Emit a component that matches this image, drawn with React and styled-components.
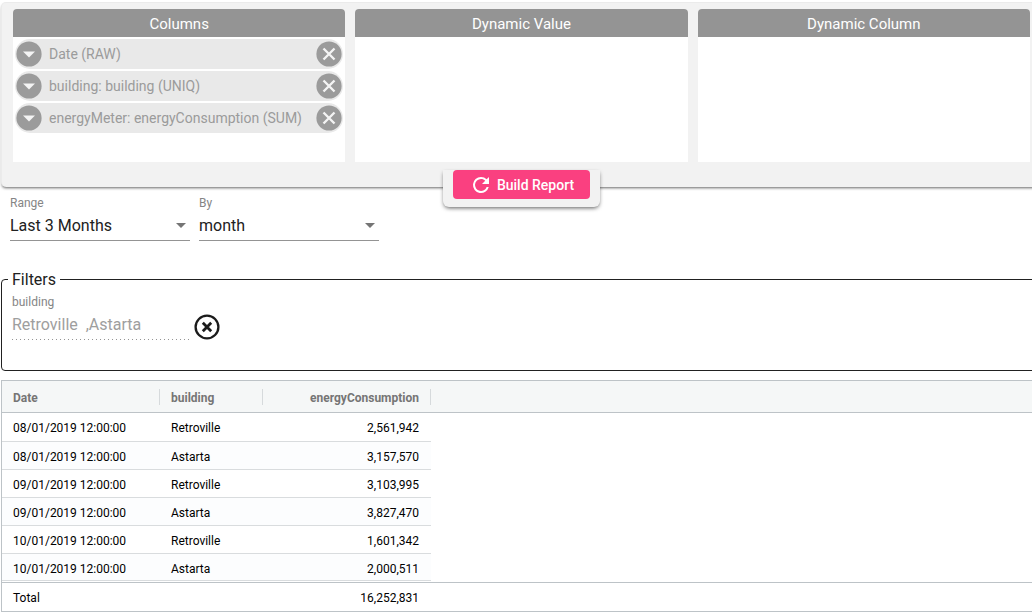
import React from 'react';
import styled, { createGlobalStyle } from 'styled-components';

const GlobalStyle = createGlobalStyle`
  *, *::before, *::after { box-sizing: border-box; }
  body {
    margin: 0;
    background: #fff;
    color: #212121;
    font-family: Roboto, "Liberation Sans", sans-serif;
    font-size: 16px;
  }
  button, input, select { font-family: inherit; }
`;

const Page = styled.main`
  overflow: hidden;
  padding: 2px 0 0 1px;
`;

/* The report area runs slightly past the right edge of the window. */
const Report = styled.div`
  margin-right: -10px;
`;

const BuilderPanel = styled.section`
  padding: 6px 11px 0;
  background: #f2f2f2;
  border: 1px solid #ebebeb;
  border-bottom: 0;
  border-radius: 5px;
  box-shadow: 0 2px 3px -1px rgba(0, 0, 0, 0.6);
`;

const DropZones = styled.div`
  display: grid;
  grid-template-columns: repeat(3, minmax(0, 1fr));
  gap: 10px;
`;

const DropZone = styled.section`
  min-height: 153px;
  background: #fff;
  border-radius: 4px 4px 0 0;
  overflow: hidden;
`;

const ZoneTitle = styled.h2`
  margin: 0;
  background: #949494;
  color: #fff;
  font-size: 15px;
  font-weight: 400;
  line-height: 28px;
  padding-top: 1px;
  height: 28px;
  text-align: center;
`;

const ChipList = styled.ul`
  display: flex;
  flex-direction: column;
  gap: 2px;
  margin: 0;
  padding: 2px;
  list-style: none;
`;

const Chip = styled.li`
  display: flex;
  align-items: center;
  gap: 7px;
  height: 30px;
  padding: 0 1px;
  background: #e9e9e9;
  border-radius: 15px;
  color: #9b9b9b;
  font-size: 14px;
  line-height: 30px;
`;

const ChipLabel = styled.span`
  flex: 1;
  min-width: 0;
  overflow: hidden;
  white-space: nowrap;
  text-overflow: ellipsis;
`;

const IconButton = styled.button`
  display: flex;
  flex: none;
  width: 26px;
  height: 26px;
  padding: 0;
  border: 0;
  border-radius: 50%;
  background: transparent;
  cursor: pointer;
`;

const PanelFooter = styled.div`
  display: flex;
  align-items: flex-start;
  justify-content: center;
  height: 25px;
  padding-top: 8px;
`;

const ButtonTab = styled.div`
  padding: 0 10px 8px;
  background: #f2f2f2;
  border-radius: 0 0 6px 6px;
  box-shadow: 0 2px 4px -1px rgba(0, 0, 0, 0.65);
`;

const BuildButton = styled.button`
  display: flex;
  align-items: center;
  justify-content: center;
  gap: 4px;
  width: 137px;
  height: 29px;
  padding: 0;
  border: 0;
  border-radius: 4px;
  background: #fa4080;
  color: #fff;
  font-size: 14px;
  font-weight: 500;
  cursor: pointer;
`;

const RangeRow = styled.div`
  display: flex;
  gap: 9px;
  padding: 8px 9px 0;
`;

const Field = styled.div`
  width: ${(p) => p.$width}px;
`;

const FieldLabel = styled.label`
  display: block;
  color: #858585;
  font-size: 12px;
  line-height: 16px;
`;

const SelectBox = styled.div`
  display: grid;
  align-items: center;
  border-bottom: 1px solid #949494;
  & > * { grid-area: 1 / 1; }
  & > svg { justify-self: end; margin-right: 4px; pointer-events: none; }
`;

const Select = styled.select`
  width: 100%;
  height: 29px;
  padding: 0;
  border: 0;
  background: transparent;
  color: #212121;
  font-size: 16px;
  appearance: none;
`;

const Filters = styled.fieldset`
  height: 101px;
  min-width: 0;
  margin: 29px 0 0;
  padding: 5px 10px 0;
  border: 1px solid #212121;
  border-radius: 4px;
`;

const Legend = styled.legend`
  margin-left: -4px;
  padding: 1px 4px 0;
  line-height: 18px;
`;

const FilterItem = styled.div`
  display: flex;
  align-items: flex-end;
  gap: 5px;
`;

const FilterInput = styled.input`
  display: block;
  width: 100%;
  height: 30px;
  padding: 0 0 2px;
  border: 0;
  background: repeating-linear-gradient(to right, #949494 0 1px, transparent 1px 4px) bottom / 100% 1px no-repeat;
  color: #9e9e9e;
  font-size: 16px;
`;

const Grid = styled.table`
  width: 100%;
  margin-top: 9px;
  table-layout: fixed;
  border: 1px solid #bdc3c7;
  border-spacing: 0;
  font-size: 12px;
`;

const Column = styled.col`
  width: ${(p) => (p.$width ? `${p.$width}px` : 'auto')};
`;

const HeadCell = styled.th`
  height: 32px;
  padding: 0;
  background: #f5f7f7;
  border-bottom: 1px solid #bdc3c7;
  color: #757575;
  font-weight: 700;
  text-align: ${(p) => (p.$numeric ? 'right' : 'left')};
`;

const HeadLabel = styled.span`
  display: block;
  height: 16px;
  padding: 0 11px;
  border-right: 1px solid #d6dadc;
  line-height: 18px;
`;

const Cell = styled.td`
  height: 28px;
  padding: 8px 12px 0 11px;
  vertical-align: top;
  background: ${(p) => (p.$odd ? '#fcfdfe' : '#fff')};
  border-bottom: 1px solid #d9dcde;
  color: #000;
  line-height: 14px;
  text-align: ${(p) => (p.$numeric ? 'right' : 'left')};
`;

const Row = styled.tr`
  &:first-child > td { height: 29px; }
  &:last-child > td { height: 27px; }
`;

const FillCell = styled.td`
  padding: 0;
`;

const TotalCell = styled.td`
  height: 28px;
  padding: 1px 12px 0 11px;
  color: #000;
  text-align: ${(p) => (p.$numeric ? 'right' : 'left')};
`;

const Rule = styled.td`
  height: 2px;
  padding: 0;
  border-bottom: 1px solid #bdc3c7;
`;

const MenuIcon = () => (
  <svg width="26" height="26" viewBox="0 0 26 26" aria-hidden="true">
    <circle cx="13" cy="13" r="12.6" fill="#9b9b9b" />
    <path d="M7 10.5h12l-6 6z" fill="#f4f4f4" />
  </svg>
);

const RemoveIcon = () => (
  <svg width="26" height="26" viewBox="0 0 26 26" aria-hidden="true">
    <circle cx="13" cy="13" r="12.6" fill="#9b9b9b" />
    <path d="M7.5 7.5l11 11M18.5 7.5l-11 11" stroke="#f4f4f4" strokeWidth="2.4" />
  </svg>
);

const ClearIcon = () => (
  <svg width="26" height="26" viewBox="0 0 26 26" aria-hidden="true">
    <circle cx="13" cy="13" r="11.4" fill="none" stroke="#1b1b1b" strokeWidth="2.3" />
    <path d="M8.8 8.8l8.4 8.4M17.2 8.8l-8.4 8.4" stroke="#1b1b1b" strokeWidth="2.8" />
  </svg>
);

const RefreshIcon = () => (
  <svg width="24" height="24" viewBox="0 0 24 24" fill="#fff" aria-hidden="true">
    <path d="M17.65 6.35A7.96 7.96 0 0 0 12 4a8 8 0 1 0 7.73 10h-2.08A6 6 0 1 1 12 6c1.66 0 3.14.69 4.22 1.78L13 11h7V4z" />
  </svg>
);

const Caret = () => (
  <svg width="10" height="5" viewBox="0 0 10 5" aria-hidden="true">
    <path d="M0 0h10L5 5z" fill="#757575" />
  </svg>
);

const zones = [
  {
    title: 'Columns',
    items: ['Date (RAW)', 'building: building (UNIQ)', 'energyMeter: energyConsumption (SUM)'],
  },
  { title: 'Dynamic Value', items: [] },
  { title: 'Dynamic Column', items: [] },
];

const rows = [
  ['08/01/2019 12:00:00', 'Retroville', '2,561,942'],
  ['08/01/2019 12:00:00', 'Astarta', '3,157,570'],
  ['09/01/2019 12:00:00', 'Retroville', '3,103,995'],
  ['09/01/2019 12:00:00', 'Astarta', '3,827,470'],
  ['10/01/2019 12:00:00', 'Retroville', '1,601,342'],
  ['10/01/2019 12:00:00', 'Astarta', '2,000,511'],
];

function SelectField({ id, label, value }) {
  return (
    <Field $width={180}>
      <FieldLabel htmlFor={id}>{label}</FieldLabel>
      <SelectBox>
        <Select id={id} defaultValue={value}>
          <option>{value}</option>
        </Select>
        <Caret />
      </SelectBox>
    </Field>
  );
}

export default function App() {
  return (
    <Page>
      <GlobalStyle />
      <Report>
        <BuilderPanel>
          <DropZones>
            {zones.map((zone) => (
              <DropZone key={zone.title}>
                <ZoneTitle>{zone.title}</ZoneTitle>
                <ChipList>
                  {zone.items.map((item) => (
                    <Chip key={item}>
                      <IconButton type="button" aria-label={`Options for ${item}`}>
                        <MenuIcon />
                      </IconButton>
                      <ChipLabel>{item}</ChipLabel>
                      <IconButton type="button" aria-label={`Remove ${item}`}>
                        <RemoveIcon />
                      </IconButton>
                    </Chip>
                  ))}
                </ChipList>
              </DropZone>
            ))}
          </DropZones>
          <PanelFooter>
            <ButtonTab>
              <BuildButton type="button">
                <RefreshIcon />
                Build Report
              </BuildButton>
            </ButtonTab>
          </PanelFooter>
        </BuilderPanel>

        <RangeRow>
          <SelectField id="range" label="Range" value="Last 3 Months" />
          <SelectField id="by" label="By" value="month" />
        </RangeRow>

        <Filters>
          <Legend>Filters</Legend>
          <FilterItem>
            <Field $width={177}>
              <FieldLabel htmlFor="building">building</FieldLabel>
              <FilterInput id="building" type="text" disabled defaultValue="Retroville  ,Astarta" />
            </Field>
            <IconButton type="button" aria-label="Remove building filter">
              <ClearIcon />
            </IconButton>
          </FilterItem>
        </Filters>

        <Grid>
          <colgroup>
            <Column $width={158} />
            <Column $width={103} />
            <Column $width={168} />
            <Column />
          </colgroup>
          <thead>
            <tr>
              <HeadCell scope="col"><HeadLabel>Date</HeadLabel></HeadCell>
              <HeadCell scope="col"><HeadLabel>building</HeadLabel></HeadCell>
              <HeadCell scope="col" $numeric><HeadLabel>energyConsumption</HeadLabel></HeadCell>
              <HeadCell as="td" />
            </tr>
          </thead>
          <tbody>
            {rows.map(([date, building, energy], i) => (
              <Row key={`${date}-${building}`}>
                <Cell $odd={i % 2 === 1}>{date}</Cell>
                <Cell $odd={i % 2 === 1}>{building}</Cell>
                <Cell $odd={i % 2 === 1} $numeric>{energy}</Cell>
                <FillCell />
              </Row>
            ))}
          </tbody>
          <tfoot>
            <tr><Rule colSpan={4} /></tr>
            <tr>
              <TotalCell>Total</TotalCell>
              <TotalCell />
              <TotalCell $numeric>16,252,831</TotalCell>
              <FillCell />
            </tr>
          </tfoot>
        </Grid>
      </Report>
    </Page>
  );
}
